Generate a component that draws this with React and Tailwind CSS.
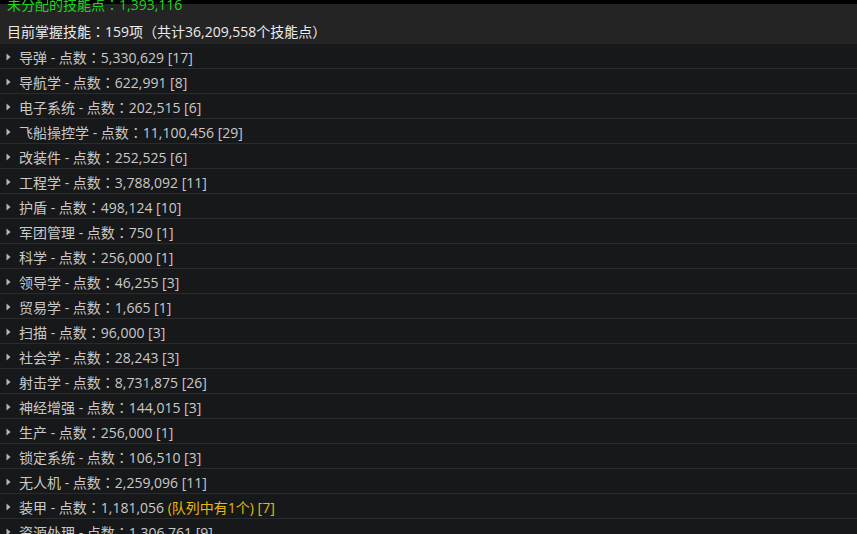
import React from "react";

const skills = [
  { name: "导弹", points: "5,330,629", count: 17 },
  { name: "导航学", points: "622,991", count: 8 },
  { name: "电子系统", points: "202,515", count: 6 },
  { name: "飞船操控学", points: "11,100,456", count: 29 },
  { name: "改装件", points: "252,525", count: 6 },
  { name: "工程学", points: "3,788,092", count: 11 },
  { name: "护盾", points: "498,124", count: 10 },
  { name: "军团管理", points: "750", count: 1 },
  { name: "科学", points: "256,000", count: 1 },
  { name: "领导学", points: "46,255", count: 3 },
  { name: "贸易学", points: "1,665", count: 1 },
  { name: "扫描", points: "96,000", count: 3 },
  { name: "社会学", points: "28,243", count: 3 },
  { name: "射击学", points: "8,731,875", count: 26 },
  { name: "神经增强", points: "144,015", count: 3 },
  { name: "生产", points: "256,000", count: 1 },
  { name: "锁定系统", points: "106,510", count: 3 },
  { name: "无人机", points: "2,259,096", count: 11 },
  { name: "装甲", points: "1,181,056", count: 7, queued: 1 },
  { name: "资源处理", points: "1,306,761", count: 9 },
];

const Arrow = () => (
  <svg width="5" height="8" viewBox="0 0 5 8" className="shrink-0">
    <path d="M0.5 0.5 L4.5 4 L0.5 7.5 Z" fill="#b8b8b8" />
  </svg>
);

const App = () => {
  return (
    <div
      className="w-[857px] h-[534px] overflow-hidden bg-[#17181a]"
      style={{ fontFamily: '"Open Sans", "Noto Sans CJK TC", sans-serif' }}
    >
      {/* top strip */}
      <div className="h-[4px] bg-black" />

      {/* header */}
      <div className="h-[40px] bg-[#242424] px-[7px] flex flex-col">
        <div className="-mt-[9px] h-[20px] leading-[20px] text-[14px] text-[#1fd41f] whitespace-nowrap">
          未分配的技能点：1,393,116
        </div>
        <div className="mt-[7px] h-[20px] leading-[20px] text-[14px] text-[#ececec] whitespace-nowrap">
          目前掌握技能：159项（共计36,209,558个技能点）
        </div>
      </div>

      {/* skill rows */}
      <div className="flex flex-col">
        {skills.map((s) => (
          <div
            key={s.name}
            className="h-[25px] flex items-center gap-[8px] pl-[6px] pt-[2px] border-b border-[#2a2b2e] text-[14px] text-[#c9c9c9] whitespace-nowrap"
          >
            <Arrow />
            <span>
              {s.name} - 点数：{s.points}{" "}
              {s.queued ? (
                <span className="text-[#e8b80c]">
                  (队列中有{s.queued}个) [{s.count}]
                </span>
              ) : (
                <>[{s.count}]</>
              )}
            </span>
          </div>
        ))}
      </div>
    </div>
  );
};

export default App;
